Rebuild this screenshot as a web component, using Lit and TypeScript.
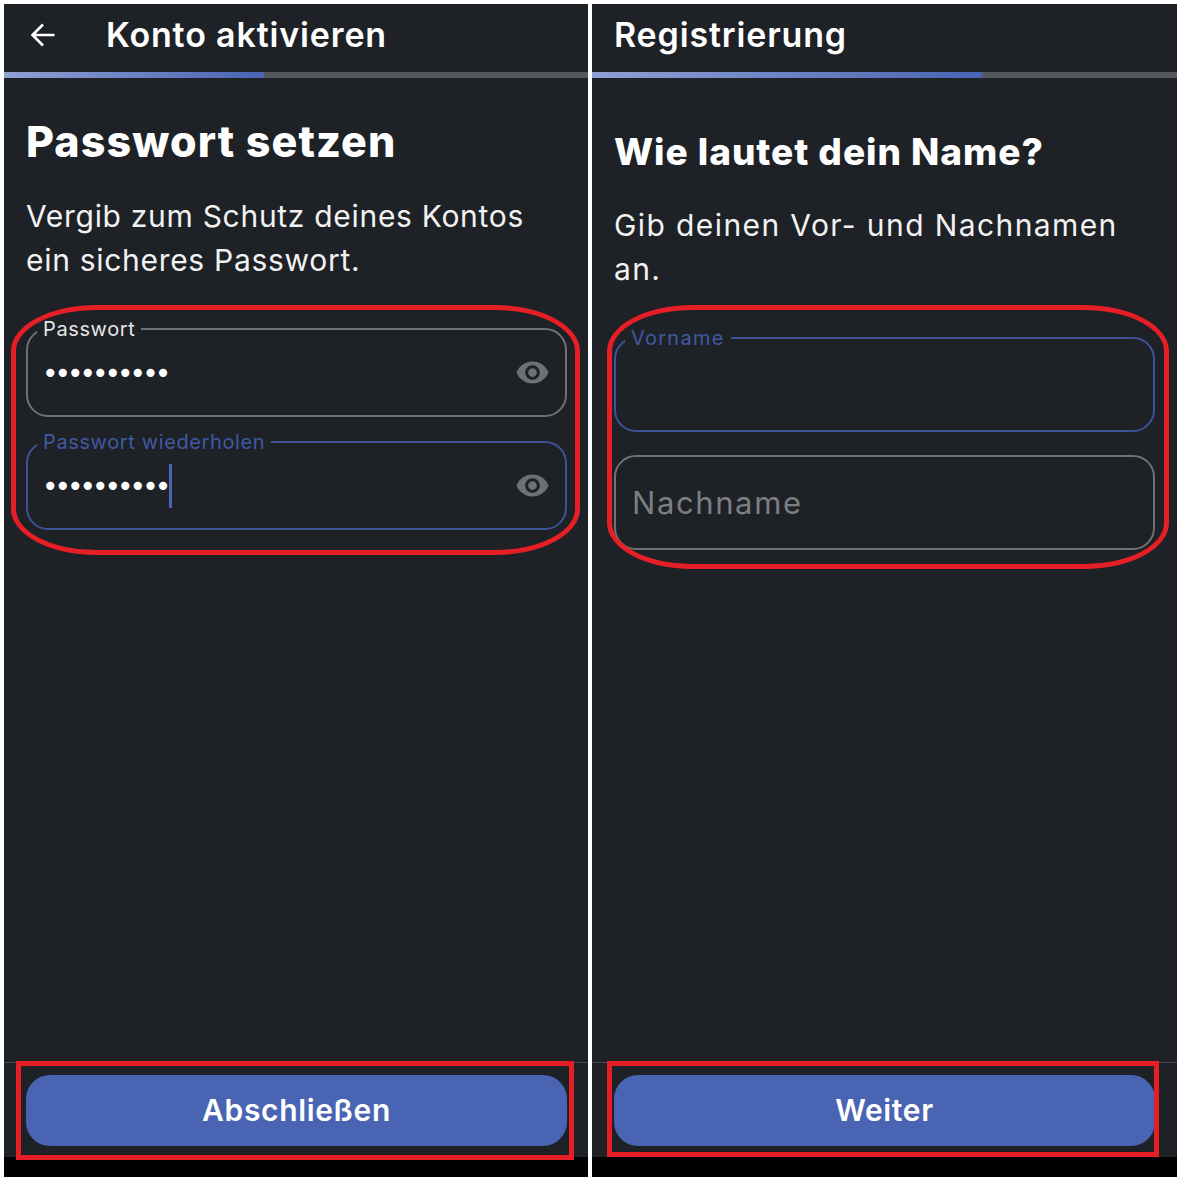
import { LitElement, html, css, svg } from 'lit';
import { customElement, property } from 'lit/decorators.js';

const EYE = svg`<path d="M12 4.5C7 4.5 2.73 7.61 1 12c1.73 4.39 6 7.5 11 7.5s9.27-3.11 11-7.5c-1.73-4.39-6-7.5-11-7.5zM12 17c-2.76 0-5-2.24-5-5s2.24-5 5-5 5 2.24 5 5-2.24 5-5 5zm0-8c-1.66 0-3 1.34-3 3s1.34 3 3 3 3-1.34 3-3-1.34-3-3-3z"/>`;

@customElement('outlined-field')
export class OutlinedField extends LitElement {
  @property() label = '';
  @property() value = '';
  @property({ type: Boolean }) focused = false;
  @property({ type: Boolean }) eye = false;
  @property({ type: Boolean }) placeholder = false;

  static styles = css`
    :host {
      display: block;
      height: 100%;
    }

    .box {
      box-sizing: border-box;
      height: 100%;
      display: flex;
      align-items: center;
      padding: 0 17px 0 16px;
      border: 2px solid #6f7174;
      border-radius: 22px;
      position: relative;
    }

    .box.focused {
      border-color: #3d5396;
    }

    label {
      position: absolute;
      top: -12px;
      left: 9px;
      padding: 0 6px;
      background: #1e2126;
      font-size: 20px;
      line-height: 22px;
      letter-spacing: 0.62px;
      color: #e6e6e6;
    }

    .focused label {
      color: #4059a4;
    }

    :host([wide-label]) label {
      letter-spacing: 1.25px;
    }

    .hint {
      font-size: 31px;
      letter-spacing: 1.6px;
      color: #7c7e83;
      margin-top: -1px;
    }

    .dots {
      font-family: 'DejaVu Sans', sans-serif;
      font-size: 28px;
      line-height: 24px;
      letter-spacing: -4px;
      color: #ffffff;
      margin-left: -2px;
      margin-top: 2px;
    }

    .caret {
      width: 3px;
      height: 44px;
      margin-left: 2px;
      background: #4a64b4;
      margin-top: 1px;
    }

    svg {
      width: 35px;
      height: 35px;
      margin-left: auto;
      margin-right: -2px;
      fill: #6d7077;
    }
  `;

  render() {
    return html`
      <div class="box ${this.focused ? 'focused' : ''}">
        ${this.label ? html`<label>${this.label}</label>` : ''}
        ${this.placeholder ? html`<span class="hint">${this.value}</span>` : ''}
        ${!this.placeholder && this.value ? html`<span class="dots">${this.value}</span>` : ''}
        ${this.focused && this.value ? html`<span class="caret"></span>` : ''}
        ${this.eye ? html`<svg viewBox="0 0 24 24">${EYE}</svg>` : ''}
      </div>
    `;
  }
}

@customElement('app-root')
export class AppRoot extends LitElement {
  static styles = css`
    :host {
      display: grid;
      grid-template-columns: 584px 585px;
      column-gap: 4px;
      box-sizing: border-box;
      width: 1181px;
      height: 1181px;
      padding: 4px;
      background: #ffffff;
      font-family: 'Inter', 'Liberation Sans', sans-serif;
      color: #ffffff;
    }

    .screen {
      position: relative;
      display: flex;
      flex-direction: column;
      background: #1e2126;
    }

    header {
      height: 68px;
      display: flex;
      align-items: center;
      padding-left: 26px;
      gap: 24px;
      box-sizing: border-box;
      padding-bottom: 6px;
    }

    .screen.second header {
      padding-left: 22px;
    }

    header svg {
      width: 26px;
      height: 26px;
      fill: none;
      stroke: #ffffff;
      stroke-width: 2.6;
    }

    header h1 {
      margin: 0;
      font-size: 34px;
      font-weight: 600;
      line-height: 40px;
      letter-spacing: 0.85px;
      margin-left: 26px;
    }

    .second header h1 {
      margin-left: 0;
    }

    .track {
      height: 6px;
      background: #55585c;
    }

    .fill {
      height: 100%;
      background: linear-gradient(90deg, #8fa0d4, #4a64b4);
    }

    main {
      flex: 1;
      padding: 37px 21px 0 22px;
    }

    .second main {
      padding: 52px 22px 0;
    }

    h2 {
      margin: 0;
      font-size: 43px;
      font-weight: 800;
      line-height: 52px;
      letter-spacing: 1.1px;
    }

    .second h2 {
      font-size: 37px;
      line-height: 44px;
      letter-spacing: 0.95px;
    }

    p {
      margin: 27px 0 0;
      font-size: 30px;
      line-height: 44px;
      font-weight: 400;
      letter-spacing: 0.7px;
      color: #f2f2f2;
    }

    .second p {
      margin-top: 29px;
      letter-spacing: 1.4px;
    }

    .fields {
      margin-top: 46px;
      display: grid;
      grid-auto-rows: 89px;
      row-gap: 24px;
    }

    .second .fields {
      margin-top: 46px;
      grid-auto-rows: 95px;
      row-gap: 23px;
    }

    footer {
      border-top: 1px solid #45484c;
      padding: 12px 21px 11px 22px;
    }

    .second footer {
      padding: 12px 22px 11px;
    }

    button {
      display: block;
      width: 100%;
      height: 71px;
      padding: 0 0 2px;
      border: none;
      border-radius: 24px;
      background: #4a64b4;
      color: #ffffff;
      font: 600 30px 'Inter', 'Liberation Sans', sans-serif;
      letter-spacing: 0.65px;
    }

    .nav {
      height: 20px;
      background: #000000;
    }

    /* red review markings drawn over the screenshots */
    .ring,
    .frame {
      position: absolute;
      box-sizing: border-box;
      border: 5px solid #e61f26;
      pointer-events: none;
    }

    .ring {
      left: 7px;
      top: 301px;
      width: 569px;
      height: 250px;
      border-radius: 85px / 46px;
    }

    .second .ring {
      left: 15px;
      width: 562px;
      height: 264px;
    }

    .frame {
      left: 12px;
      top: 1057px;
      width: 558px;
      height: 99px;
    }

    .second .frame {
      left: 15px;
      width: 552px;
      height: 96px;
    }
  `;

  private screen(
    cls: string,
    title: string,
    back: boolean,
    progress: number,
    heading: string,
    text: unknown,
    fields: unknown,
    action: string
  ) {
    return html`
      <section class="screen ${cls}">
        <header>
          ${back
            ? html`<svg viewBox="0 0 26 26"><path d="M24.5 13H3M13 2.5 2.5 13 13 23.5" /></svg>`
            : ''}
          <h1>${title}</h1>
        </header>
        <div class="track"><div class="fill" style="width: ${progress}%"></div></div>
        <main>
          <h2>${heading}</h2>
          <p>${text}</p>
          <div class="fields">${fields}</div>
        </main>
        <footer><button>${action}</button></footer>
        <div class="nav"></div>
        <div class="ring"></div>
        <div class="frame"></div>
      </section>
    `;
  }

  render() {
    return html`
      ${this.screen(
        'first',
        'Konto aktivieren',
        true,
        44.5,
        'Passwort setzen',
        html`Vergib zum Schutz deines Kontos<br />ein sicheres Passwort.`,
        html`
          <outlined-field label="Passwort" value="••••••••••" eye></outlined-field>
          <outlined-field label="Passwort wiederholen" value="••••••••••" eye focused></outlined-field>
        `,
        'Abschließen'
      )}
      ${this.screen(
        'second',
        'Registrierung',
        false,
        66.7,
        'Wie lautet dein Name?',
        html`Gib deinen Vor- und Nachnamen<br />an.`,
        html`
          <outlined-field label="Vorname" focused wide-label></outlined-field>
          <outlined-field value="Nachname" placeholder></outlined-field>
        `,
        'Weiter'
      )}
    `;
  }
}
